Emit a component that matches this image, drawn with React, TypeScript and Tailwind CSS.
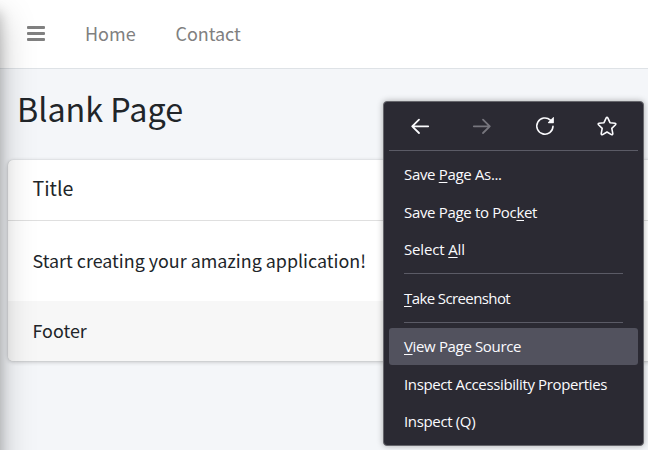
import React from "react";

const pageFont = "font-['Noto_Sans_CJK_SC','Open_Sans',sans-serif]";
const menuFont = "font-['Open_Sans','Noto_Sans',sans-serif]";

function Key({ children }: { children: React.ReactNode }) {
  return <span className="underline decoration-1 underline-offset-2">{children}</span>;
}

function Item({ children, active }: { children: React.ReactNode; active?: boolean }) {
  return (
    <li
      className={`mx-[5px] flex h-[37.4px] items-center rounded-[3px] pl-[15px] ${
        active ? "bg-[#52525e]" : ""
      }`}
    >
      {children}
    </li>
  );
}

function Label({ className, children }: { className: string; children: React.ReactNode }) {
  return <span className={`whitespace-nowrap ${className}`}>{children}</span>;
}

function ContextMenu() {
  return (
    <div
      className={`absolute left-[383px] top-[101px] h-[345px] w-[261px] rounded-[4px] border border-[#66666c] bg-[#2b2a33] text-[15px] text-[#fbfbfe] shadow-[0_0_6px_rgba(0,0,0,0.3)] ${menuFont}`}
    >
      <div className="mx-[5px] flex h-[49px] items-center justify-between border-b border-[#5b5b66] px-[21px]">
        <svg className="h-5 w-5" viewBox="0 0 20 20" fill="none" stroke="#fbfbfe" strokeWidth="1.8" strokeLinecap="round" strokeLinejoin="round">
          <path d="M18.2 10.3H2.2M9 3.6L2.2 10.3L9 17" />
        </svg>
        <svg className="h-5 w-5" viewBox="0 0 20 20" fill="none" stroke="#77767e" strokeWidth="1.8" strokeLinecap="round" strokeLinejoin="round">
          <path d="M1.8 10.3H17.8M11 3.6L17.8 10.3L11 17" />
        </svg>
        <svg className="h-5 w-5" viewBox="0 0 20 20" fill="none" stroke="#fbfbfe" strokeWidth="1.6" strokeLinecap="round">
          <path d="M15.4 4.1A8.1 8.1 0 1 0 18 10.2" />
          <path d="M18.9 1.2V6.6Q18.9 7.2 18.3 7.2H13.5Q12.5 7 13.1 6.3L18.2 1.2Q18.7 .8 18.9 1.2Z" fill="#fbfbfe" stroke="none" />
        </svg>
        <svg className="h-5 w-5" viewBox="0 0 20 20" fill="none" stroke="#fbfbfe" strokeWidth="1.6" strokeLinejoin="round">
          <path d="M9.2 1.9Q10 .6 10.8 1.9L13 6.7L18 7.3Q19.4 7.7 18.5 8.8L14.8 12.4L15.8 17.6Q15.8 19.1 14.4 18.6L10 16L5.6 18.6Q4.2 19.1 4.2 17.6L5.2 12.4L1.5 8.8Q.6 7.7 2 7.3L7 6.7Z" />
        </svg>
      </div>
      <ul className="pt-[5.4px]">
        <Item><Label className="pb-[1.6px] tracking-[-0.33px]">Save <Key>P</Key>age As...</Label></Item>
        <Item><Label className="tracking-[-0.33px]">Save Page to Poc<Key>k</Key>et</Label></Item>
        <Item><Label className="pb-[1.6px] tracking-[-0.15px]">Select <Key>A</Key>ll</Label></Item>
        <li className="mx-5 mb-[6.4px] mt-[4.4px] h-px bg-[#5b5b66]" />
        <Item><Label className="pb-[1.6px] tracking-[-0.6px]"><Key>T</Key>ake Screenshot</Label></Item>
        <li className="mx-5 mb-[4.6px] mt-[4.4px] h-px bg-[#5b5b66]" />
        <Item active><Label className="pb-[1.2px] tracking-[-0.35px]"><Key>V</Key>iew Page Source</Label></Item>
        <Item><Label className="tracking-[-0.37px]">Inspect Accessibility Properties</Label></Item>
        <Item><Label className="tracking-[-0.35px]">Inspect (Q)</Label></Item>
      </ul>
    </div>
  );
}

export default function App() {
  return (
    <div className={`relative h-[450px] w-[648px] overflow-hidden bg-[#f4f6f9] text-[#212529] ${pageFont}`}>
      <nav className="flex h-[69px] items-center border-b border-[#dee2e6] bg-white pb-[2px] pl-[27px] text-[18px] text-[#808080]">
        <div className="mt-[1px] flex h-[15px] w-[18px] flex-col justify-between">
          <span className="h-[2.6px] rounded-[1px] bg-[#808080]" />
          <span className="h-[2.6px] rounded-[1px] bg-[#808080]" />
          <span className="h-[2.6px] rounded-[1px] bg-[#808080]" />
        </div>
        <a className="ml-[40px] w-[90.5px]">Home</a>
        <a className="tracking-[-0.05px]">Contact</a>
      </nav>
      <h1 className="flex h-[91px] items-center pb-[13px] pl-[17px] text-[32.3px]">Blank Page</h1>
      <section className="ml-2 h-[201px] w-[700px] overflow-hidden rounded-[5px] bg-white text-[17.9px] shadow-[0_0_1px_rgba(0,0,0,0.2),0_1px_4px_rgba(0,0,0,0.22)]">
        <header className="flex h-[61px] items-center border-b border-[#dfdfdf] pb-[4px] pl-[24.5px] text-[19.6px]">Title</header>
        <p className="flex h-[80px] items-center pb-[2px] pl-[24.5px]">Start creating your amazing application!</p>
        <footer className="flex h-[60px] items-center bg-[#f7f7f7] pb-[2px] pl-[24.5px]">Footer</footer>
      </section>
      <div className="absolute -left-[40px] top-0 h-[600px] w-[40px] shadow-[0_18px_35px_rgba(0,0,0,0.25),0_12px_12px_rgba(0,0,0,0.22)]" />
      <ContextMenu />
    </div>
  );
}
